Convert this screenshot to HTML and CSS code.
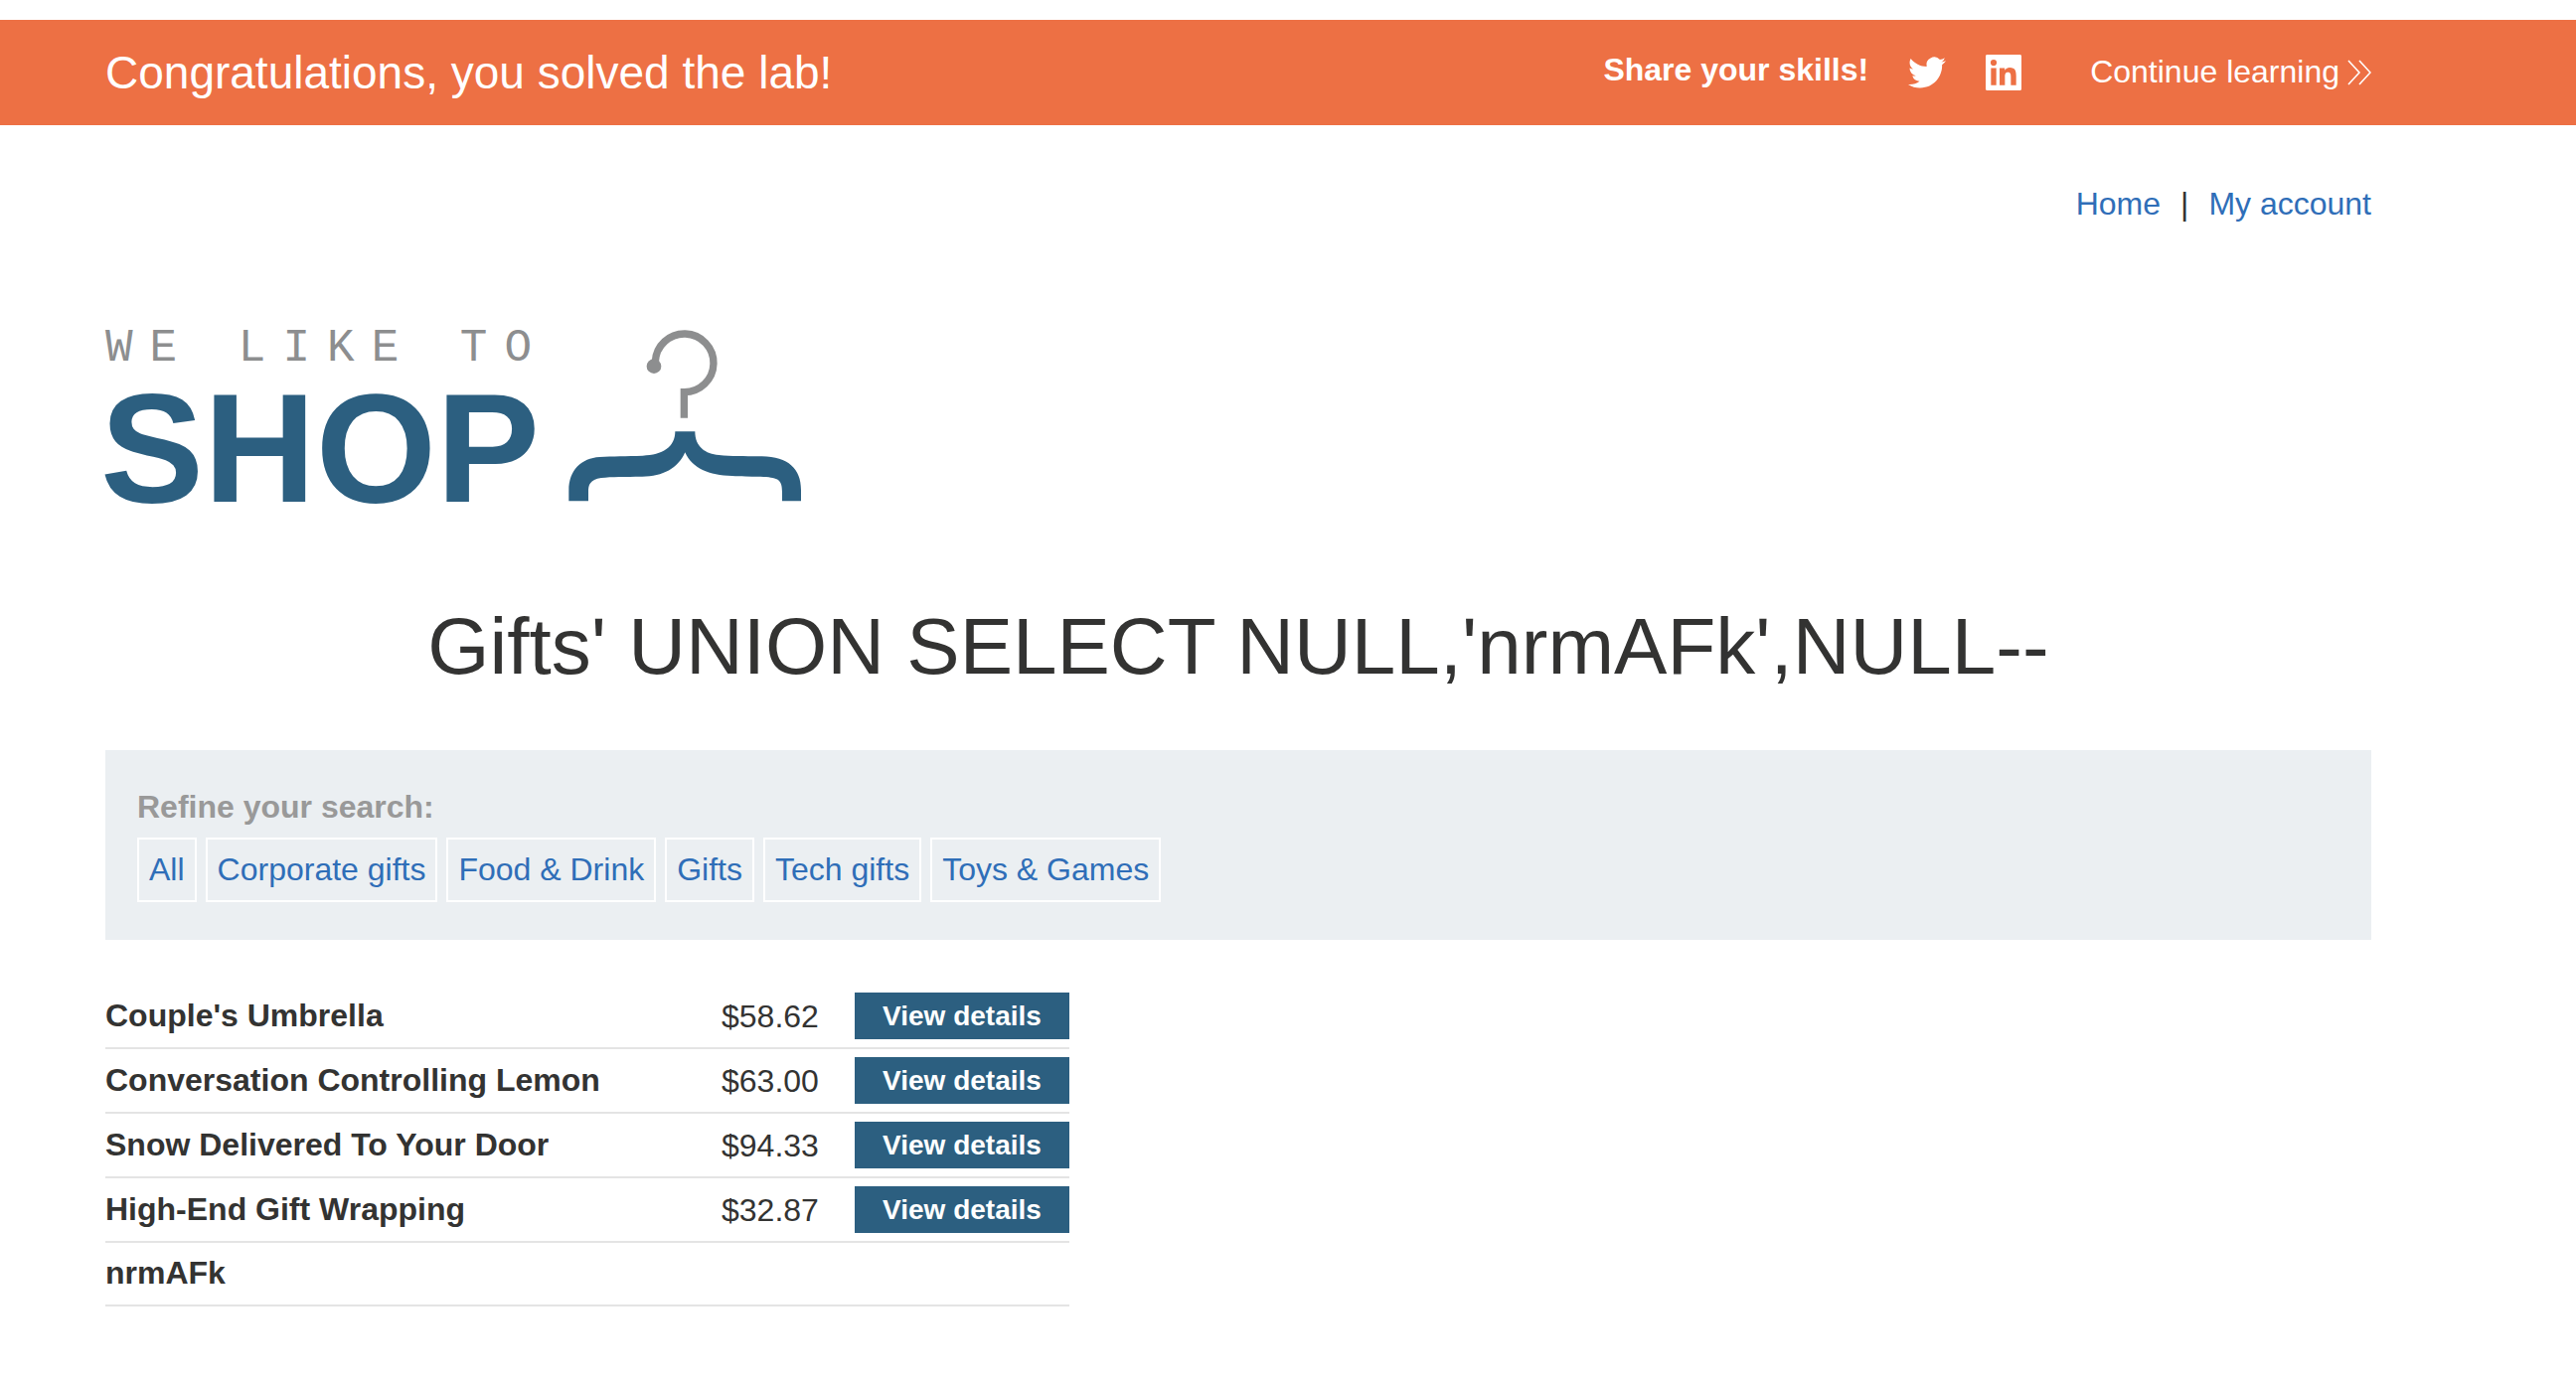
FILE: index.html
```html
<!DOCTYPE html>
<html lang="en">
<head>
<meta charset="utf-8">
<title>We like to shop</title>
<link rel="stylesheet" href="styles.css">
</head>
<body>
<header class="banner">
  <h2 class="banner-title">Congratulations, you solved the lab!</h2>
  <div class="share">
    <span class="share-label">Share your skills!</span>
    <a class="icon-link" href="#" aria-label="Twitter">
      <svg width="38" height="38" viewBox="0 0 24 24" fill="currentColor"><path d="M23.953 4.57a10 10 0 0 1-2.825.775 4.958 4.958 0 0 0 2.163-2.723c-.951.555-2.005.959-3.127 1.184a4.92 4.92 0 0 0-8.384 4.482C7.69 8.095 4.067 6.13 1.64 3.162a4.822 4.822 0 0 0-.666 2.475c0 1.71.87 3.213 2.188 4.096a4.904 4.904 0 0 1-2.228-.616v.06a4.923 4.923 0 0 0 3.946 4.827 4.996 4.996 0 0 1-2.212.085 4.936 4.936 0 0 0 4.604 3.417 9.867 9.867 0 0 1-6.102 2.105c-.39 0-.779-.023-1.17-.067a13.995 13.995 0 0 0 7.557 2.209c9.053 0 13.998-7.496 13.998-13.985 0-.21 0-.42-.015-.63A9.935 9.935 0 0 0 24 4.59z"/></svg>
    </a>
    <a class="icon-link" href="#" aria-label="LinkedIn">
      <svg width="36" height="36" viewBox="0 0 24 24" fill="currentColor"><path d="M20.447 20.452h-3.554v-5.569c0-1.328-.027-3.037-1.852-3.037-1.853 0-2.136 1.445-2.136 2.939v5.667H9.351V9h3.414v1.561h.046c.477-.9 1.637-1.85 3.37-1.85 3.601 0 4.267 2.37 4.267 5.455v6.286zM5.337 7.433a2.062 2.062 0 1 1 0-4.125 2.062 2.062 0 0 1 0 4.125zM7.119 20.452H3.555V9h3.564v11.452zM23 0H1C.4 0 0 .4 0 1v22c0 .6.4 1 1 1h22c.6 0 1-.4 1-1V1c0-.6-.4-1-1-1z"/></svg>
    </a>
  </div>
  <a class="continue" href="#">
    <span class="continue-label">Continue learning</span>
    <svg width="24" height="26" viewBox="0 0 24 26" fill="none" stroke="currentColor" stroke-width="1.6"><path d="M1 1l11 12L1 25M12 1l11 12-11 12"/></svg>
  </a>
</header>

<main class="page">
  <nav class="top-nav">
    <a href="#">Home</a><span>|</span><a href="#">My account</a>
  </nav>

  <svg class="logo" width="702" height="180" viewBox="0 0 702 180" role="img" aria-label="We like to shop">
    <text class="logo-tagline" x="0" y="32">WE LIKE TO</text>
    <text class="logo-name" x="-5" y="174">SHOP</text>
    <g transform="translate(444 -21) scale(.33333)">
      <path d="M328 162A88 88 0 1 1 415 254V332" fill="none" stroke="#8d8e8f" stroke-width="22"/>
      <circle cx="324" cy="176" r="22" fill="#8d8e8f"/>
      <path fill="#2c5f80" d="M388 373H448C448 420 480 441 520 444C560 448 600 447 650 448C730 450 768 485 768 550V583H711V555C711 520 700 512 655 510C620 508 590 510 560 507C490 505 440 485 418 436C396 485 350 510 285 509C240 510 195 509 165 513C130 518 126 535 126 555V583H67V550C67 490 105 453 160 450C200 447 240 448 290 446C350 444 388 420 388 373Z"/>
    </g>
  </svg>

  <h1 class="title">Gifts' UNION SELECT NULL,'nrmAFk',NULL--</h1>

  <section class="filters">
    <p class="filters-label">Refine your search:</p>
    <div class="filters-list">
      <a href="#">All</a>
      <a href="#">Corporate gifts</a>
      <a href="#">Food &amp; Drink</a>
      <a href="#">Gifts</a>
      <a href="#">Tech gifts</a>
      <a href="#">Toys &amp; Games</a>
    </div>
  </section>

  <table class="products">
    <tbody>
      <tr><th scope="row">Couple's Umbrella</th><td class="price">$58.62</td><td class="action"><a class="button" href="#">View details</a></td></tr>
      <tr><th scope="row">Conversation Controlling Lemon</th><td class="price">$63.00</td><td class="action"><a class="button" href="#">View details</a></td></tr>
      <tr><th scope="row">Snow Delivered To Your Door</th><td class="price">$94.33</td><td class="action"><a class="button" href="#">View details</a></td></tr>
      <tr><th scope="row">High-End Gift Wrapping</th><td class="price">$32.87</td><td class="action"><a class="button" href="#">View details</a></td></tr>
      <tr><th scope="row">nrmAFk</th><td class="price"></td><td class="action"></td></tr>
    </tbody>
  </table>
</main>
</body>
</html>
```
FILE: styles.css
```css
* { box-sizing: border-box; }

body {
  margin: 0;
  padding-top: 20px;
  background: #fff;
  color: #333332;
  font: 32px/40px "Liberation Sans", Arial, sans-serif;
}

a { color: #2f6eb8; text-decoration: none; }
svg { display: block; }

.banner {
  display: flex;
  align-items: center;
  min-height: 106px;
  padding: 0 206px 0 106px;
  background: #ed7044;
  color: #fff;
}
.banner a { color: #fff; }
.banner-title {
  flex: 1;
  margin: 0;
  font-size: 46px;
  line-height: 56px;
  font-weight: 400;
}
.share { display: flex; align-items: center; gap: 40px; }
.share-label { padding-bottom: 6px; font-weight: 700; }
.continue-label { padding-bottom: 2px; }
.continue {
  display: flex;
  align-items: center;
  gap: 8px;
  margin-left: 69px;
}

.page { padding: 59px 206px 60px 106px; }

.top-nav {
  display: flex;
  justify-content: flex-end;
  gap: 20px;
}

.logo { margin-top: 106px; overflow: visible; }
.logo-tagline {
  font-family: "Liberation Mono", "Courier New", monospace;
  font-size: 46px;
  letter-spacing: 17px;
  fill: #8d8e8f;
}
.logo-name {
  font-size: 156px;
  font-weight: 700;
  fill: #2c5f80;
}

.title {
  margin: 92px 0 56px;
  font-size: 80px;
  line-height: 96px;
  font-weight: 400;
  text-align: center;
}

.filters {
  padding: 37px 32px 38px;
  background: #ebeff2;
}
.filters-label {
  margin: 0 0 11px;
  color: #999;
  font-weight: 700;
}
.filters-list { display: flex; flex-wrap: wrap; gap: 9px; }
.filters-list a {
  padding: 0 10px;
  border: 2px solid #fff;
  line-height: 61px;
}

.products {
  width: 100%;
  max-width: 970px;
  margin-top: 45px;
  border-collapse: separate;
  border-spacing: 0;
}
.products th, .products td {
  height: 65px;
  padding: 8px 0;
  border-bottom: 2px solid #e4e4e4;
  vertical-align: middle;
}
.products th { padding: 7px 0 9px; text-align: left; }
.products tr:last-child > * { height: 64px; }
.products .price { width: 134px; }
.products .action { width: 216px; }
.button {
  display: block;
  background: #2c5f80;
  color: #fff;
  font-size: 28px;
  line-height: 47px;
  font-weight: 700;
  text-align: center;
}
```
